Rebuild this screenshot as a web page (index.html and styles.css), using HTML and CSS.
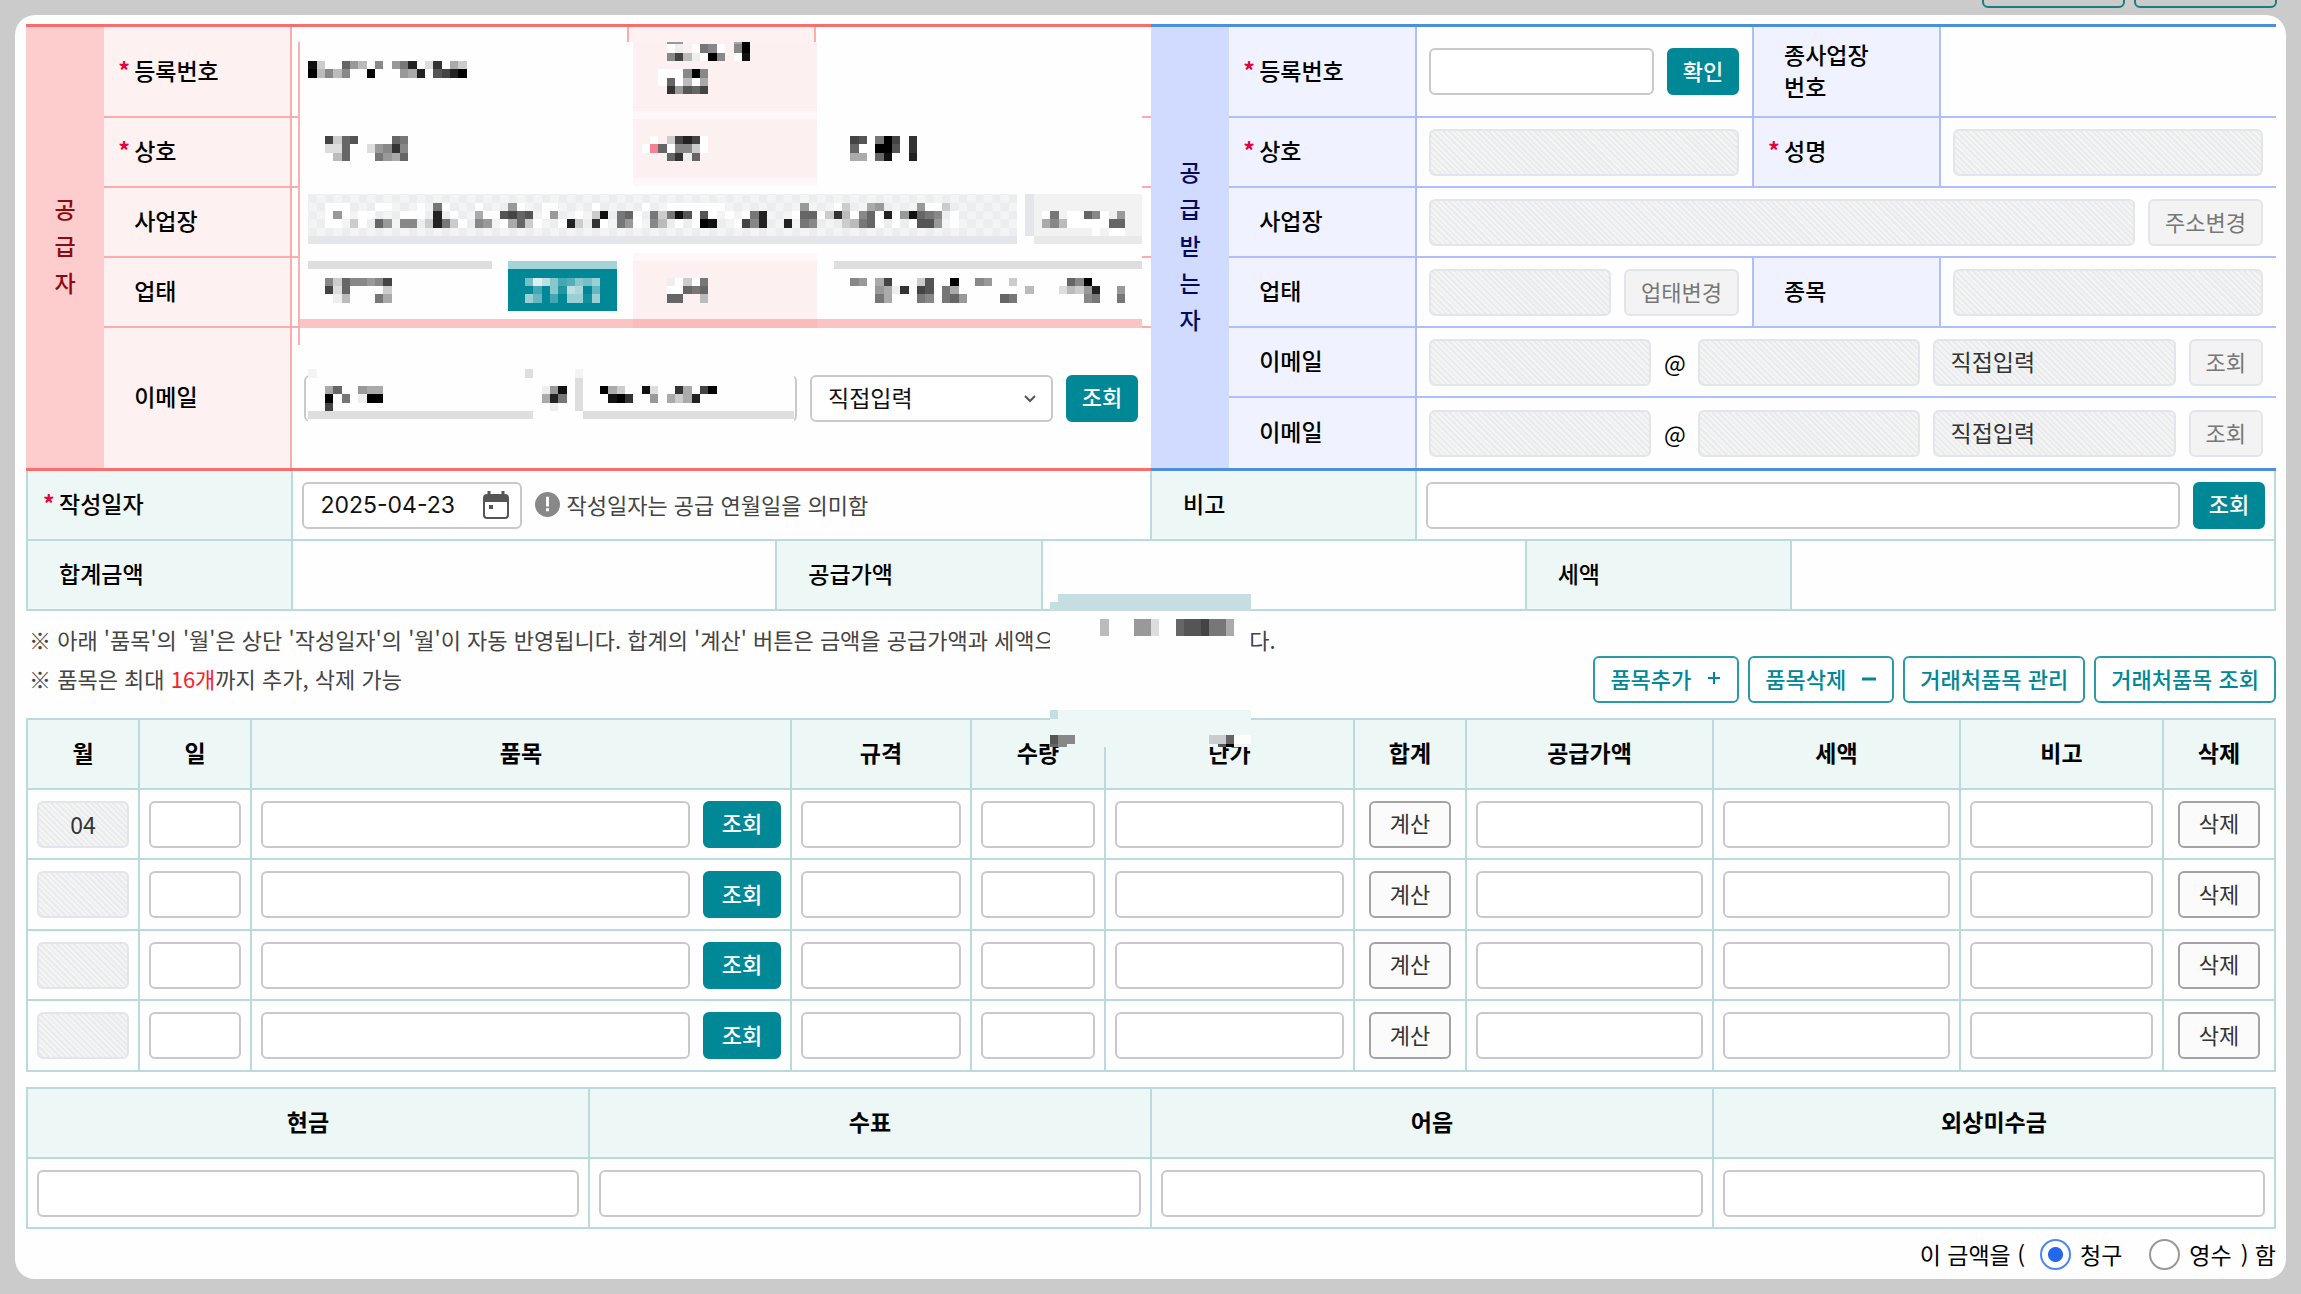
FILE: index.html
```html
<!DOCTYPE html>
<html lang="ko">
  <head>
    <meta charset="UTF-8" />
    <meta name="viewport" content="width=device-width, initial-scale=1.0" />
    <title>전자세금계산서 발급</title>
    <link rel="stylesheet" href="styles.css">
  </head>
  <body>
    <div class="topbar">
      <button type="button" class="btn-top" aria-label="이전"></button>
      <button type="button" class="btn-top" aria-label="다음"></button>
    </div>

    <main class="card">
      <div class="parties">
        <table class="party supplier">
          <colgroup>
            <col class="w-side"><col class="w-label"><col class="w-value"><col class="w-sub"><col class="w-value">
          </colgroup>
          <tr class="tall">
            <th class="side" rowspan="5">공<br>급<br>자</th>
            <th class="req">등록번호</th>
            <td></td>
            <th class="sub"></th>
            <td></td>
          </tr>
          <tr>
            <th class="req">상호</th>
            <td></td>
            <th class="sub"></th>
            <td></td>
          </tr>
          <tr>
            <th>사업장</th>
            <td colspan="3"></td>
          </tr>
          <tr>
            <th>업태</th>
            <td></td>
            <th class="sub"></th>
            <td></td>
          </tr>
          <tr class="double">
            <th>이메일</th>
            <td colspan="3">
              <div class="fields">
                <input type="text" aria-label="이메일 아이디">
                <span class="at">@</span>
                <input type="text" aria-label="이메일 도메인">
                <span class="select">
                  <select aria-label="도메인 선택"><option>직접입력</option></select>
                  <svg viewBox="0 0 12 8" width="12" height="8"><path d="M1 1l5 5 5-5" fill="none" stroke="#555" stroke-width="2"/></svg>
                </span>
                <button type="button" class="btn primary">조회</button>
              </div>
            </td>
          </tr>
        </table>

        <table class="party buyer">
          <colgroup>
            <col class="w-side"><col class="w-label"><col class="w-value"><col class="w-sub"><col class="w-value">
          </colgroup>
          <tr class="tall">
            <th class="side" rowspan="6">공<br>급<br>받<br>는<br>자</th>
            <th class="req">등록번호</th>
            <td>
              <div class="fields">
                <input type="text" aria-label="등록번호">
                <button type="button" class="btn primary">확인</button>
              </div>
            </td>
            <th class="sub">종사업장<br>번호</th>
            <td></td>
          </tr>
          <tr>
            <th class="req">상호</th>
            <td><div class="fields"><input type="text" aria-label="상호" disabled></div></td>
            <th class="sub req">성명</th>
            <td><div class="fields"><input type="text" aria-label="성명" disabled></div></td>
          </tr>
          <tr>
            <th>사업장</th>
            <td colspan="3">
              <div class="fields">
                <input type="text" aria-label="사업장" disabled>
                <button type="button" class="btn" disabled>주소변경</button>
              </div>
            </td>
          </tr>
          <tr>
            <th>업태</th>
            <td>
              <div class="fields">
                <input type="text" aria-label="업태" disabled>
                <button type="button" class="btn" disabled>업태변경</button>
              </div>
            </td>
            <th class="sub">종목</th>
            <td><div class="fields"><input type="text" aria-label="종목" disabled></div></td>
          </tr>
          <tr>
            <th>이메일</th>
            <td colspan="3">
              <div class="fields">
                <input type="text" aria-label="이메일 아이디 1" disabled>
                <span class="at">@</span>
                <input type="text" aria-label="이메일 도메인 1" disabled>
                <span class="select"><select aria-label="도메인 선택 1" disabled><option>직접입력</option></select></span>
                <button type="button" class="btn" disabled>조회</button>
              </div>
            </td>
          </tr>
          <tr>
            <th>이메일</th>
            <td colspan="3">
              <div class="fields">
                <input type="text" aria-label="이메일 아이디 2" disabled>
                <span class="at">@</span>
                <input type="text" aria-label="이메일 도메인 2" disabled>
                <span class="select"><select aria-label="도메인 선택 2" disabled><option>직접입력</option></select></span>
                <button type="button" class="btn" disabled>조회</button>
              </div>
            </td>
          </tr>
        </table>
      </div>

      <table class="grid summary">
        <colgroup>
          <col class="s1"><col class="s2"><col class="s1"><col class="s3"><col class="s1"><col class="s3"><col class="s1"><col class="s2">
        </colgroup>
        <tr>
          <th class="req"><label for="date">작성일자</label></th>
          <td colspan="3">
            <div class="fields">
              <span class="date">
                <input type="text" id="date" value="2025-04-23">
                <svg viewBox="0 0 26 28" width="26" height="28">
                  <path d="M6 0v5M20 0v5" stroke="#555" stroke-width="3"/>
                  <rect x="1" y="4" width="24" height="23" rx="3" fill="none" stroke="#555" stroke-width="2"/>
                  <path d="M1 4h24v7H1z" fill="#555"/>
                  <rect x="6" y="14" width="4" height="4" fill="#555"/>
                </svg>
              </span>
              <span class="hint">
                <svg viewBox="0 0 26 26" width="25" height="25">
                  <circle cx="13" cy="13" r="13" fill="#888"/>
                  <path d="M13 5v10M13 17v3" stroke="#fff" stroke-width="3"/>
                </svg>
                작성일자는 공급 연월일을 의미함
              </span>
            </div>
          </td>
          <th><label for="memo">비고</label></th>
          <td colspan="3">
            <div class="fields">
              <input type="text" id="memo">
              <button type="button" class="btn primary">조회</button>
            </div>
          </td>
        </tr>
        <tr>
          <th>합계금액</th>
          <td></td>
          <th>공급가액</th>
          <td colspan="3"></td>
          <th>세액</th>
          <td></td>
        </tr>
      </table>

      <div class="tools">
        <div class="notes">
          <p>※ 아래 '품목'의 '월'은 상단 '작성일자'의 '월'이 자동 반영됩니다. 합계의 '계산' 버튼은 금액을 공급가액과 세액으로 나누어서 계산합니다.</p>
          <p>※ 품목은 최대 <em>16개</em>까지 추가, 삭제 가능</p>
        </div>
        <div class="actions">
          <button type="button" class="btn outline">품목추가
            <svg viewBox="0 0 16 16" width="16" height="16"><path d="M8 2v12M2 8h12" stroke="#008896" stroke-width="2"/></svg>
          </button>
          <button type="button" class="btn outline">품목삭제
            <svg viewBox="0 0 16 16" width="16" height="16"><path d="M1 9h14" stroke="#008896" stroke-width="3"/></svg>
          </button>
          <button type="button" class="btn outline">거래처품목 관리</button>
          <button type="button" class="btn outline">거래처품목 조회</button>
        </div>
      </div>

      <table class="grid items">
        <colgroup>
          <col class="i-day"><col class="i-day"><col class="i-name"><col class="i-spec"><col class="i-qty"><col class="i-price"><col class="i-day"><col class="i-amount"><col class="i-amount"><col class="i-memo"><col class="i-day">
        </colgroup>
        <thead>
          <tr>
            <th>월</th><th>일</th><th>품목</th><th>규격</th><th>수량</th><th>단가</th><th>합계</th><th>공급가액</th><th>세액</th><th>비고</th><th>삭제</th>
          </tr>
        </thead>
        <tbody>
          <tr>
            <td><input type="text" class="month" aria-label="월" value="04" disabled></td>
            <td><input type="text" aria-label="일"></td>
            <td><div class="fields"><input type="text" aria-label="품목"><button type="button" class="btn primary">조회</button></div></td>
            <td><input type="text" aria-label="규격"></td>
            <td><input type="text" aria-label="수량"></td>
            <td><input type="text" aria-label="단가"></td>
            <td class="mid"><button type="button" class="btn plain">계산</button></td>
            <td><input type="text" aria-label="공급가액"></td>
            <td><input type="text" aria-label="세액"></td>
            <td><input type="text" aria-label="비고"></td>
            <td class="mid"><button type="button" class="btn plain">삭제</button></td>
          </tr>
          <tr>
            <td><input type="text" class="month" aria-label="월" disabled></td>
            <td><input type="text" aria-label="일"></td>
            <td><div class="fields"><input type="text" aria-label="품목"><button type="button" class="btn primary">조회</button></div></td>
            <td><input type="text" aria-label="규격"></td>
            <td><input type="text" aria-label="수량"></td>
            <td><input type="text" aria-label="단가"></td>
            <td class="mid"><button type="button" class="btn plain">계산</button></td>
            <td><input type="text" aria-label="공급가액"></td>
            <td><input type="text" aria-label="세액"></td>
            <td><input type="text" aria-label="비고"></td>
            <td class="mid"><button type="button" class="btn plain">삭제</button></td>
          </tr>
          <tr>
            <td><input type="text" class="month" aria-label="월" disabled></td>
            <td><input type="text" aria-label="일"></td>
            <td><div class="fields"><input type="text" aria-label="품목"><button type="button" class="btn primary">조회</button></div></td>
            <td><input type="text" aria-label="규격"></td>
            <td><input type="text" aria-label="수량"></td>
            <td><input type="text" aria-label="단가"></td>
            <td class="mid"><button type="button" class="btn plain">계산</button></td>
            <td><input type="text" aria-label="공급가액"></td>
            <td><input type="text" aria-label="세액"></td>
            <td><input type="text" aria-label="비고"></td>
            <td class="mid"><button type="button" class="btn plain">삭제</button></td>
          </tr>
          <tr>
            <td><input type="text" class="month" aria-label="월" disabled></td>
            <td><input type="text" aria-label="일"></td>
            <td><div class="fields"><input type="text" aria-label="품목"><button type="button" class="btn primary">조회</button></div></td>
            <td><input type="text" aria-label="규격"></td>
            <td><input type="text" aria-label="수량"></td>
            <td><input type="text" aria-label="단가"></td>
            <td class="mid"><button type="button" class="btn plain">계산</button></td>
            <td><input type="text" aria-label="공급가액"></td>
            <td><input type="text" aria-label="세액"></td>
            <td><input type="text" aria-label="비고"></td>
            <td class="mid"><button type="button" class="btn plain">삭제</button></td>
          </tr>
        </tbody>
      </table>

      <table class="grid payment">
        <thead>
          <tr>
            <th><label for="cash">현금</label></th>
            <th><label for="check">수표</label></th>
            <th><label for="bill">어음</label></th>
            <th><label for="credit">외상미수금</label></th>
          </tr>
        </thead>
        <tbody>
          <tr>
            <td><input type="text" id="cash"></td>
            <td><input type="text" id="check"></td>
            <td><input type="text" id="bill"></td>
            <td><input type="text" id="credit"></td>
          </tr>
        </tbody>
      </table>

      <div class="claim">
        <span>이 금액을 (</span>
        <label class="first"><input type="radio" name="claim" checked>청구</label>
        <label class="second"><input type="radio" name="claim">영수</label>
        <span>) 함</span>
      </div>

      <!-- masked personal data -->
      <svg class="mask mask-supplier" viewBox="0 0.72 101 45.6" preserveAspectRatio="none" shape-rendering="crispEdges">
        <defs>
          <pattern id="check-pat" width="2" height="2" patternUnits="userSpaceOnUse">
            <rect width="2" height="2" fill="#f4f4f4"/>
            <path d="M0 0h1v1H0zM1 1h1v1H1z" fill="#ebedee"/>
          </pattern>
        </defs>
        <path d="M0 0h101v37H0zM1 40h58.3v6.4H1z" fill="#fefefe"/>
        <path d="M40 0h22v18H40zM40 26h22v8H40z" fill="#fdf0f0"/>
        <path d="M40 9h22v1H40zM40 17h22v1H40zM40 26h22v1H40z" fill="#fff7f7"/>
        <path d="M0 34h101v1H0z" fill="#fac4c4"/>
        <path d="M40 34h22v1H40z" fill="#fabbbb"/>
        <rect x="1" y="19" width="85" height="5" fill="url(#check-pat)"/>
        <path d="M1 24h85v1H1zM87 19h1v5h-1z" fill="#e5e6ea"/>
        <path d="M88 19h13v5H88z" fill="#f2f2f2"/>
        <path d="M88 24h13v1H88z" fill="#e9e9ea"/>
        <path d="M1 27h22v1H1zM64 27h37v1H64zM1 45h27v1H1zM34 45h25.3v1H34zM33 41h1v4h-1zM27 40h1v1h-1z" fill="#dedede"/>
        <path d="M1 40h1v1H1zM33 40h1v1h-1z" fill="#f4f4f4"/>
        <path d="M25 27h13v1H25z" fill="#a5d4d8"/>
        <path d="M25 28h13v5H25z" fill="#008896"/>
        <path d="M42 13h1v1h-1z" fill="#f68195"/>
      </svg>
      <div class="mask mask-edge"></div>
      <svg class="mask mask-notes" viewBox="0 0 24 18.4" preserveAspectRatio="none" shape-rendering="crispEdges">
        <path d="M0 1h24v13H0z" fill="#fefefe"/>
        <path d="M1 0h23v2H0V1h1zM0 14h1v1H0z" fill="#c6dee2"/>
        <path d="M1 14h23v4.4H0V15h1z" fill="#edf8f6"/>
      </svg>
    </main>

    <script src="mask.js"></script>
  </body>
</html>
```
FILE: styles.css
```css
* {
  box-sizing: border-box;
}

body {
  margin: 0;
  background: #cbcbcb;
  color: #000;
  font-family: "Noto Sans CJK KR", sans-serif;
  font-size: 23px;
  line-height: 32px;
}

.topbar {
  display: flex;
  justify-content: flex-end;
  align-items: flex-end;
  gap: 9px;
  height: 15px;
  padding: 0 24px 7px;
  overflow: hidden;
}

.btn-top {
  flex: none;
  width: 143px;
  height: 48px;
  background: none;
  border: 2px solid #1b7c84;
  border-radius: 6px;
}

.card {
  position: relative;
  margin: 0 15px 15px;
  padding: 9px 10px 0 11px;
  background: #fefefe;
  border-radius: 20px;
}

table {
  width: 100%;
  table-layout: fixed;
  border-collapse: separate;
  border-spacing: 0;
}

th,
td {
  height: 70px;
  padding: 0;
}

th {
  padding-bottom: 4px;
  font-weight: 500;
  text-align: left;
}

.req::before {
  content: "*";
  display: inline-block;
  width: 16px;
  margin-left: -16px;
  color: #e6003c;
  font-weight: 700;
}

/* supplier / buyer */
.parties {
  display: grid;
  grid-template-columns: 1fr 1fr;
}

.party {
  border-top: 3px solid var(--edge);
  border-bottom: 3px solid var(--edge);
}

.supplier {
  --edge: #f96d6d;
  --line: #fdabab;
  --side: #fdcccc;
  --label: #fdf1f1;
  --text: #8f0a10;
}

.buyer {
  --edge: #4a90dc;
  --line: #aebeff;
  --side: #d1dbff;
  --label: #f0f3ff;
  --text: #04095c;
}

.w-side { width: 78px; }
.w-label { width: 186px; }
.w-value { width: 336px; }
.w-sub { width: 187px; }

.party th,
.party td {
  border-bottom: 2px solid var(--line);
}

.party tr:last-child > *,
.party .side {
  border-bottom: 0;
}

.party th {
  padding-left: 30px;
  background: var(--label);
}

.party .side {
  padding: 0 0 4px;
  background: var(--side);
  color: var(--text);
  line-height: 37px;
  text-align: center;
}

.party td,
.party .sub {
  border-left: 2px solid var(--line);
}

.party .tall > * {
  height: 91px;
}

.party .double > * {
  height: 140px;
}

.party .fields {
  padding: 0 13px 0 12px;
}

/* fields */
.fields {
  display: flex;
  align-items: center;
  gap: 13px;
  padding: 0 9px;
}

input[type="text"],
select {
  display: block;
  width: 100%;
  height: 47px;
  padding: 0 16px;
  background: #fff;
  border: 2px solid #c9c9c9;
  border-radius: 6px;
  color: #111;
  font: inherit;
}

.fields input[type="text"] {
  flex: 1;
  min-width: 0;
}

input[type="text"]:disabled,
select:disabled {
  background: repeating-linear-gradient(45deg, #f3f4f3 0 2px, #e9ebec 2px 4px);
  border-color: #e4e5ea;
  color: #333;
  opacity: 1;
}

select {
  padding-bottom: 3px;
  appearance: none;
}

.select {
  position: relative;
  flex: none;
  width: 243px;
}

.select svg {
  position: absolute;
  top: 20px;
  right: 17px;
}

.at {
  width: 21px;
  text-align: center;
}

.btn {
  flex: none;
  height: 47px;
  padding: 0 15px 2px;
  background: #f3f3f3;
  border: 2px solid #e4e5ea;
  border-radius: 6px;
  color: #777;
  font: inherit;
  font-size: 22px;
}

.btn.primary {
  width: 72px;
  padding: 0 0 4px;
  background: #008896;
  border-color: #008896;
  color: #fff;
  font-weight: 500;
}

.btn.plain {
  width: 82px;
  padding: 0 0 4px;
  background: #fbfbfb;
  border-color: #a3a3a3;
  color: #333;
}

.btn.outline {
  display: flex;
  align-items: center;
  gap: 15px;
  padding-bottom: 4px;
  background: #fff;
  border-color: #2a9aa6;
  color: #008896;
  font-weight: 500;
}

/* teal tables */
.grid {
  border-top: 2px solid #b9dbde;
  border-left: 2px solid #b9dbde;
}

.grid th,
.grid td {
  border-right: 2px solid #b9dbde;
  border-bottom: 2px solid #b9dbde;
}

.grid th {
  background: #edf7f6;
}

.grid td > input[type="text"] {
  width: calc(100% - 18px);
  margin: 0 9px;
}

.summary {
  border-top: 0;
}

.summary th {
  padding-left: 31px;
}

.s1 { width: 265px; }
.s2 { width: 483px; }
.s3 { width: 109px; }

.date {
  display: flex;
  align-items: center;
  width: 220px;
  padding-right: 11px;
  background: #fff;
  border: 2px solid #c9c9c9;
  border-radius: 6px;
}

.date input[type="text"] {
  height: 43px;
  padding-right: 0;
  border: 0;
  font-family: Inter, sans-serif;
}

.hint {
  display: flex;
  align-items: center;
  gap: 6px;
  padding-bottom: 2px;
  color: #444;
  font-size: 22px;
}

.tools {
  display: flex;
  justify-content: space-between;
  height: 107px;
  padding-left: 3px;
}

.notes {
  padding-top: 9px;
  color: #444;
  font-size: 22px;
  line-height: 39px;
  white-space: nowrap;
}

.notes p {
  margin: 0;
}

.notes em {
  color: #f5222d;
  font-style: normal;
}

.actions {
  display: flex;
  align-items: flex-end;
  gap: 9px;
  padding-bottom: 15px;
}

.i-day { width: 112px; }
.i-name { width: 540px; }
.i-spec { width: 180px; }
.i-qty { width: 134px; }
.i-price { width: 249px; }
.i-amount { width: 247px; }
.i-memo { width: 203px; }

.items th,
.payment th {
  font-weight: 700;
  text-align: center;
}

.items tbody tr:nth-child(even) td {
  height: 71px;
}

.items .btn.primary {
  width: 78px;
}

.mid {
  text-align: center;
}

.month {
  font-family: Inter, sans-serif;
  text-align: center;
}

.payment {
  margin-top: 15px;
}

.claim {
  display: flex;
  justify-content: flex-end;
  align-items: center;
  gap: 9px;
  height: 50px;
}

.claim label {
  display: flex;
  align-items: center;
  gap: 9px;
}

.claim .first {
  margin-left: 6px;
}

.claim .second {
  margin-left: 18px;
}

.claim input {
  appearance: none;
  width: 31px;
  height: 31px;
  margin: 0;
  background: #fff;
  border: 2px solid #999;
  border-radius: 50%;
}

.claim input:checked {
  border-color: #4c86f5;
  background: radial-gradient(circle, #2368ec 7px, #fff 8px);
}

/* pixelated overlays */
.mask {
  position: absolute;
}

.mask-supplier {
  top: 27px;
  left: 285px;
  width: 842px;
  height: 380px;
}

.mask-edge {
  top: 27px;
  left: 283px;
  width: 2px;
  height: 303px;
  background: #fdb0b0;
}

.mask-notes {
  top: 579px;
  left: 1035px;
  width: 201px;
  height: 153px;
}
```
FILE: mask.js
```js
// each patch: [column, row, lines]; a hex digit is a grey level, "." is left clear
const supplier = [
  [1, 3, ["1c..69b.8.972.d3.ac", "0b8b8..0...9a2.5420"]],
  [3, 12, ["4c65....67", "dd6..d9838", ".b6...79a6"]],
  [44, 0, ["99......a0", "fe.f78f.80", "84bef08.f1"]],
  [43, 4, ["fff808", "f6fbfa", ".39564"]],
  [41, 12, [".f.c424f", "f.6f88cf", "...63e6"]],
  [66, 12, ["45.704.3", "6f.005.3", "aa.61..2"]],
  [1, 20, [
    "..fff...ff...f.7f...f...9f..ff....f.....f..fffffff.........9...fc..a9....9ffc",
    "..f9f.ff...fff.2.f..aff5465.f9..f.c1.76f.7c715f5f.f.f72...f66fc3bf86f2f91678.f",
    "..ff.cf.69.88.c27cf.89.fa6cf..f2c.3f.79f.8b.f.f01..f482..2.78...cb76f.f.f559.f",
  ]],
  [89, 21, ["f7.ff68fe9", "a8bfffff66", "......f.ff"]],
  [3, 29, ["8c688984", "4d6....c", ".eb...7a"]],
  [44, 29, ["efcf7", "ff676", "66..b"]],
  [66, 29, ["89.a4...c5..0..89..c......680"]],
  [69, 30, ["9ae3.45.7a........b...dbc92..9", "7a...78.769....67........87..7"]],
  [3, 42, ["a6..9aa", "0.7.e00", "4"]],
  [29, 42, ["e91", "a27", ".e"]],
  [36, 42, ["0ac..1d..3a.40", ".103..9.aca2"]],
];

const notes = [
  [6, 3, ["b...99d..655477a", "b...99d..655477a"]],
  [0, 17, ["588................cc6ff", "68..................50"]],
];

// white at a varying opacity, over the teal button
const button = [[27, 29, ["7db845879", "04082ba06", "960409919"]]];

function paint(selector, patches, fillFor) {
  const svg = document.querySelector(selector);
  patches.forEach(([col, row, lines]) => {
    lines.forEach((line, y) => {
      [...line].forEach((ch, x) => {
        if (ch === ".") return;
        const rect = document.createElementNS("http://www.w3.org/2000/svg", "rect");
        rect.setAttribute("x", col + x);
        rect.setAttribute("y", row + y);
        rect.setAttribute("width", 1);
        rect.setAttribute("height", 1);
        rect.setAttribute("fill", fillFor(ch));
        svg.appendChild(rect);
      });
    });
  });
}

paint(".mask-supplier", supplier, (ch) => `#${ch}${ch}${ch}`);
paint(".mask-supplier", button, (ch) => `#ffffff${ch}${ch}`);
paint(".mask-notes", notes, (ch) => `#${ch}${ch}${ch}`);
```
